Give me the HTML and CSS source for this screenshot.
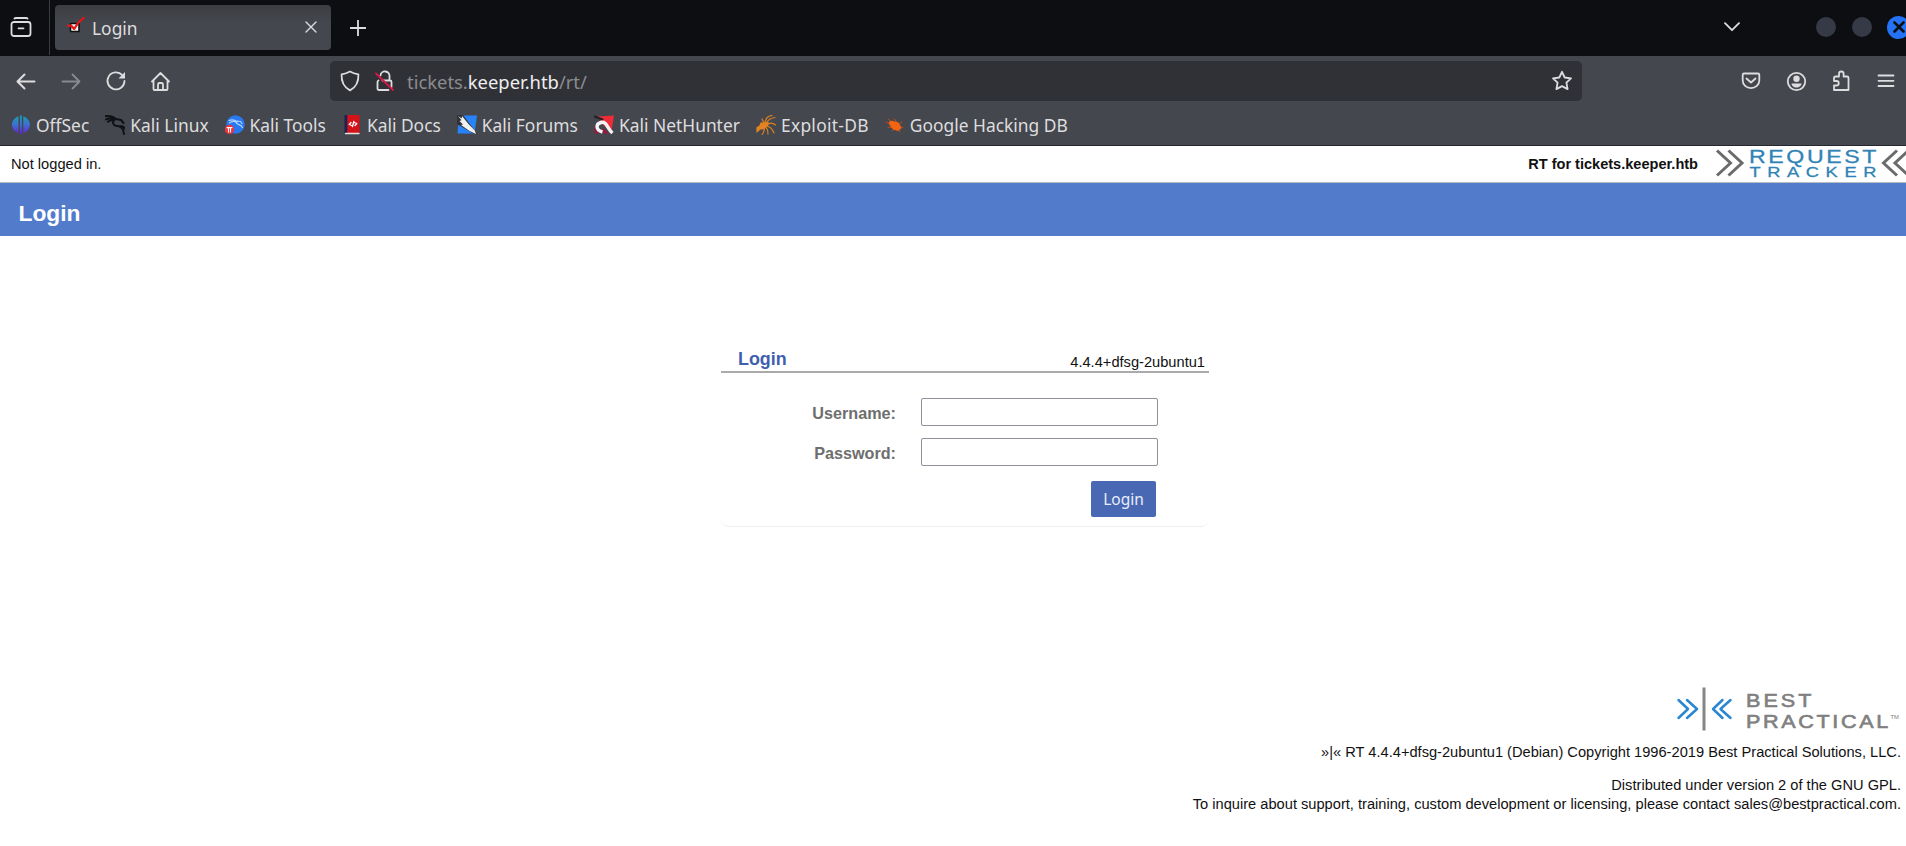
FILE: index.html
```
<!DOCTYPE html>
<html lang="en">
<head>
    <meta charset="UTF-8">
    <meta name="viewport" content="width=device-width, initial-scale=1.0">
    <title>Login</title>
    <link rel="stylesheet" href="styles.css">
</head>
<body>
    <!-- browser tabs -->
    <div class="tabbar">
        <div class="firefox-view">
            <svg width="22" height="22" viewBox="0 0 22 22"><path d="M4.500 1.500Q5 1 6 1h10q1 0 1.500.5M4 5h14a2.500 2.500 0 0 1 2.500 2.500v9a2.500 2.500 0 0 1-2.500 2.500H4a2.500 2.500 0 0 1-2.500-2.500v-9A2.500 2.500 0 0 1 4 5zM8.500 11.300h5"/></svg>
        </div>
        <div class="tab">
            <svg class="favicon" width="18" height="18" viewBox="0 0 18 18"><path fill="#f4f4f4" stroke="#111" stroke-width="1.600" d="M3.500 6.500h8.500v8H3.500z"/><path stroke="#e81518" stroke-width="2.300" d="M1.200 8.500l3 .3 3 3.200L11 6l5.500-5"/></svg>
            <span class="tab-title">Login</span>
            <svg class="tab-close" width="12" height="12" viewBox="0 0 12 12"><path stroke-width="1.400" d="M1 1l10 10M11 1L1 11"/></svg>
        </div>
        <svg class="new-tab" width="16" height="16" viewBox="0 0 16 16"><path d="M8 .5v15M.5 8h15"/></svg>
        <svg class="all-tabs" width="16" height="10" viewBox="0 0 16 10"><path d="M1 1.200l7 7 7-7"/></svg>
        <div class="window-buttons">
            <span class="dot"></span>
            <span class="dot"></span>
            <span class="dot close"><svg width="12" height="12" viewBox="0 0 12 12"><path stroke="#0d0e12" stroke-width="2.600" d="M1.500 1.500l9 9M10.500 1.500l-9 9"/></svg></span>
        </div>
    </div>

    <!-- navigation -->
    <div class="toolbar">
        <div class="nav">
            <span><svg width="22" height="22" viewBox="0 0 22 22"><path stroke-width="2" d="M19.500 11.500H3M9.500 4.500L2.500 11.500l7 7"/></svg></span>
            <span class="off"><svg width="22" height="22" viewBox="0 0 22 22"><path stroke-width="1.800" d="M2.500 11.500H19M12.500 4.500l7 7-7 7"/></svg></span>
            <span><svg width="22" height="22" viewBox="0 0 22 22"><path d="M17.300 5.200A8.500 8.500 0 1 0 19.500 11"/><path fill="#dddddf" stroke="none" d="M20 2v6.500h-6.500z"/></svg></span>
            <span><svg width="22" height="22" viewBox="0 0 22 22"><path d="M2 11.500l8.500-8.500L19 11.500M3.500 10.500V19q0 1 1 1h12q1 0 1-1v-8.500M8 20v-5.500Q8 13 9.500 13h2q1.500 0 1.500 1.500V20"/></svg></span>
        </div>
        <div class="urlbar">
            <svg width="22" height="22" viewBox="0 0 22 22"><path d="M11 1.600c2.500 1.500 5 2.300 8.400 2.800.4 7.600-1.600 12.400-8.400 16C4.200 16.800 2.200 12 2.600 4.400 6 3.900 8.500 3.100 11 1.600z"/></svg>
            <svg class="lock" width="22" height="22" viewBox="0 0 22 22"><path d="M6.500 5.500a4.500 4.500 0 0 1 9 1V10M8.500 10.500h7.500q1.500 0 1.500 1.500v5M14.500 20h-9.500q-1.500 0-1.500-1.500V12q0-1 1-1.500"/><path stroke="#d81848" d="M2 3.500l17 16.500"/></svg>
            <span class="url">tickets.<b>keeper.htb</b>/rt/</span>
            <svg class="star" width="22" height="22" viewBox="0 0 22 22"><path d="M11 1.800l2.700 5.700 6.300.9-4.600 4.300 1.200 6.400-5.600-3-5.600 3 1.200-6.400L2 8.400l6.300-.9z"/></svg>
        </div>
        <div class="nav tools">
            <span><svg width="22" height="22" viewBox="0 0 22 22"><path d="M4 3.500h14q1.300 0 1.300 1.300v5.600a8.300 7.700 0 0 1-16.600 0V4.800Q2.700 3.500 4 3.500zM6.500 8.500L11 12.500l4.500-4"/></svg></span>
            <span><svg width="22" height="22" viewBox="0 0 22 22"><circle cx="11.500" cy="11.500" r="8.700"/><path fill="#dddddf" stroke="none" d="M11.500 5.500a3.200 3.200 0 0 1 0 6.400 3.200 3.200 0 0 1 0-6.400zM6.500 13.500h10c0 2.200-2.300 4-5 4s-5-1.800-5-4z"/></svg></span>
            <span><svg width="22" height="22" viewBox="0 0 22 22"><path d="M4 11V8q0-1.500 1.500-1.500H9V3.800a2.300 2.300 0 0 1 4.600 0v2.700H17q1.500 0 1.500 1.500v12H4v-4.500h2.500a2.200 2.200 0 0 0 0-4.500z"/></svg></span>
            <span><svg width="22" height="22" viewBox="0 0 22 22"><path d="M3.500 5.500h15M3.500 10.800h15M3.500 16h15"/></svg></span>
        </div>
    </div>

    <!-- bookmarks -->
    <div class="bookmarks">
        <div class="bookmark">
            <svg width="20" height="20" viewBox="0 0 20 20"><defs><linearGradient id="offsec" x1="0" y1="0" x2="0" y2="1"><stop offset="0" stop-color="#14a3b4"/><stop offset=".5" stop-color="#3f6fd0"/><stop offset="1" stop-color="#6222d8"/></linearGradient></defs><path fill="url(#offsec)" stroke="none" d="M7.500 1.200v17Q1 15.500.8 9.700 1 4 7.500 1.200zM9 .5h1.800V19H9zM12.300 1.200v17q6.500-2.700 6.700-8.500Q18.800 4 12.300 1.200z"/></svg>
            <span>OffSec</span>
        </div>
        <div class="bookmark">
            <svg width="20" height="20" viewBox="0 0 20 20"><path stroke="#101114" stroke-width="2" d="M0 1.300c4-.6 8 .2 11.500 3M1 4.500c3-2 6-1 9-.3M3 6.800C5 5 7 5 9 5.500M9.500 5C6.500 7.500 8.500 11 12 11c4 0 6.500 2 7 8M11 4l5 1 2.500 3M16 11q3 .5 4 2.500"/></svg>
            <span>Kali Linux</span>
        </div>
        <div class="bookmark">
            <svg width="20" height="20" viewBox="0 0 20 20"><circle cx="10.500" cy="9.500" r="9.200" fill="#2878f0" stroke="none"/><path stroke="#b6d5ff" stroke-width="1.200" d="M4 5.500c3-1 6-.5 8 1.500M4.500 8C7 6 9 6 11 7c0 3 5 1.500 6.500 5.500M12 6l3.500.5 1.500 2"/><circle cx="4.500" cy="14.500" r="4.700" fill="#ed3340" stroke="none"/><path stroke="#fff" stroke-width="1.100" d="M2 12.600h5M3.500 13v4M5.500 13v4"/></svg>
            <span>Kali Tools</span>
        </div>
        <div class="bookmark">
            <svg width="20" height="20" viewBox="0 0 20 20"><path fill="#d51218" stroke="none" d="M4 0h13.500v18H4z"/><path fill="#1b2150" stroke="none" d="M2.500 0h2.800v18H2.500z"/><path stroke="#e8e4e4" d="M3.500 18.500h13.500" stroke-width="1.300"/><path stroke="#fff" stroke-width="1.300" d="M9 7.500l-1.800 2 2.500 1M13 10.500l1.800-2-2.500-1M11.800 6.500l-1.300 5"/></svg>
            <span>Kali Docs</span>
        </div>
        <div class="bookmark">
            <svg width="20" height="20" viewBox="0 0 20 20"><path fill="#2683fa" stroke="none" d="M2 .5h18L17.500 18.500H.5z"/><path fill="#303238" stroke="none" d="M0 0h6l14 18.500h-4L0 9z"/><path fill="#f0f0ee" stroke="none" d="M1 1l3.700 2.600L5 1l6.500 8 6.300 6.500 1.200 3.500-6.500-3L4 10l2-.6L2.500 6l2-.7z"/></svg>
            <span>Kali Forums</span>
        </div>
        <div class="bookmark">
            <svg width="20" height="20" viewBox="0 0 20 20"><path fill="#ed2c38" stroke="none" d="M4 1.500L20 .5 17.500 17 9 10z"/><path fill="#9e163c" stroke="none" d="M0 10l5 8.500H1zM9 13l6 5.500H9z"/><path stroke="#202126" stroke-width="2" d="M.5 1.500l8 3"/><path stroke="#f4f4f4" stroke-width="3.400" stroke-linecap="butt" d="M8.500 17C1.500 15 1.500 9 7 7.500c6-1.500 6 6 11.500 10.500"/></svg>
            <span>Kali NetHunter</span>
        </div>
        <div class="bookmark edb">
            <svg width="20" height="20" viewBox="0 0 20 20"><g stroke="#d98223" stroke-width="1.200"><path d="M9 9C9 4 12 1 16 .5M10 8c2-3 5-5 9-5.500M11 10c3-3 6-2 8.500 0M10 11c4 0 6 2 8 7M9 12c2 1 3 4 3 7M8 12c1 3 0 5-2 7.500M8 8L6 4"/></g><path fill="#e28220" stroke="none" d="M.3 12.500l3-2 1.500-3.200 3 .5 5-1-.8 4-4 3.500-3.500.2L.5 18z"/></svg>
            <span>Exploit-DB</span>
        </div>
        <div class="bookmark">
            <svg width="20" height="20" viewBox="0 0 20 20"><path stroke="#b84e20" stroke-width="1" d="M1 7l6 3M3 4l6 5M9 3.500l3 4M17 7l-4 3M3 12l6 1M7 16l3-3M15 17l-2-4M18 12.500l-4 1"/><path fill="#f26412" stroke="none" d="M3.500 8Q5 5 8 6l5.500 1.500 1.500 2.500 1.500 2-1 2-2.500 2-5-1.500-3-4z"/></svg>
            <span>Google Hacking DB</span>
        </div>
    </div>

    <!-- page -->
    <div class="topline">
        <span class="user">Not logged in.</span>
        <span class="rtname">RT for tickets.keeper.htb</span>
        <svg class="rt-logo" width="194" height="34" viewBox="0 0 194 34">
            <g stroke="#6b6b6b" stroke-width="3"><path d="M2 2.500l13.500 12.500L2 27.500M13.500 2.500L27 15 13.500 27.500M182 2.500L168.500 15 182 27.500M193.500 2.500L180 15l13.500 12.500"/></g>
            <g class="rt-text"><text transform="translate(34 15.300) scale(1.250 1)" font-size="18.500" textLength="102" lengthAdjust="spacing">REQUEST</text><text transform="translate(34.500 29) scale(1.250 1)" font-size="14.600" textLength="101.500" lengthAdjust="spacing">TRACKER</text></g>
        </svg>
    </div>
    <div class="header">
        <h1>Login</h1>
    </div>

    <div class="login-box">
        <div class="titlebox">
            <h2>Login</h2>
            <span>4.4.4+dfsg-2ubuntu1</span>
        </div>
        <form id="login" onsubmit="return false">
            <div class="row">
                <label for="user">Username:</label>
                <input type="text" id="user">
            </div>
            <div class="row">
                <label for="pass">Password:</label>
                <input type="password" id="pass">
            </div>
            <button class="btn">Login</button>
        </form>
    </div>

    <div class="footer">
        <svg class="bp-logo" width="226" height="44" viewBox="0 0 226 44">
            <g stroke="#2a86d1" stroke-width="2.500"><path d="M3.500 13l9.500 9-9.500 9M12 13l10 9-10 9M47.500 13L38 22l9.500 9M55.500 13L45.500 22l10 9"/></g>
            <path stroke="#858585" stroke-width="3" stroke-linecap="butt" d="M29 .5v43"/>
            <g class="bp-text"><text transform="translate(71 19.500) scale(1.200 1)" font-size="18" textLength="54.500" lengthAdjust="spacing">BEST</text><text transform="translate(71 40.500) scale(1.200 1)" font-size="18" textLength="118.500" lengthAdjust="spacing">PRACTICAL</text><text class="tm" x="215.500" y="32" font-size="5.500" textLength="8.500" lengthAdjust="spacingAndGlyphs">TM</text></g>
        </svg>
        <p class="copyright">&raquo;|&laquo; RT 4.4.4+dfsg-2ubuntu1 (Debian) Copyright 1996-2019 Best Practical Solutions, LLC.</p>
        <p>Distributed under version 2 of the GNU GPL.<br>To inquire about support, training, custom development or licensing, please contact sales@bestpractical.com.</p>
    </div>
</body>
</html>
```

FILE: styles.css
```
* {
    box-sizing: border-box;
}
body {
    margin: 0;
    height: 846px;
    overflow: hidden;
    background: #fff;
    color: #111;
    font-family: "Liberation Sans", Arial, sans-serif;
    font-size: 14.65px;
}
svg {
    display: block;
    flex: none;
    fill: none;
    stroke: #dddddf;
    stroke-width: 1.8;
    stroke-linecap: round;
    stroke-linejoin: round;
}

/* browser */
.tabbar, .toolbar, .bookmarks {
    display: flex;
    font-family: "Noto Sans", sans-serif;
    font-size: 17.4px;
    color: #dddddf;
    white-space: nowrap;
    overflow: hidden;
}
.tabbar {
    height: 56px;
    background: #0d0e12;
}
.firefox-view {
    width: 50px;
    height: 55px;
    padding: 17px 0 0 10px;
    border-right: 1px solid #3a3b40;
}
.tab {
    display: flex;
    align-items: center;
    width: 276px;
    height: 45px;
    margin: 5px 0 0 5px;
    padding: 0 14px 0 12px;
    border-radius: 4px;
    background: linear-gradient(#3c3d42, #45474e 40%);
}
.favicon {
    margin-top: -4px;
}
.tab-title {
    margin-left: 7px;
    flex: 1;
}
.tab-close {
    margin-top: -1px;
}
.new-tab {
    margin: 20px 0 0 19px;
}
.all-tabs {
    margin: 22px 0 0 auto;
}
.window-buttons {
    display: flex;
    align-items: center;
    width: 166px;
    height: 54px;
    padding-left: 76px;
    gap: 16px;
}
.dot {
    flex: none;
    width: 20px;
    height: 20px;
    border-radius: 50%;
    background: #353a46;
}
.close {
    display: flex;
    align-items: center;
    justify-content: center;
    width: 23px;
    height: 23px;
    margin-left: -1px;
    background: #2473f7;
}
.toolbar {
    height: 49px;
    background: #45474e;
}
.nav {
    display: flex;
    flex: none;
    width: 180px;
    height: 50px;
    margin-left: 3.5px;
}
.nav span {
    width: 45px;
    padding: 14px 0 0 11.5px;
}
.off svg {
    opacity: .45;
}
.urlbar {
    display: flex;
    align-items: center;
    flex: none;
    width: 1252px;
    height: 40px;
    margin: 5px 0 0 146.5px;
    padding: 0 9px;
    border-radius: 5px;
    background: #303136;
    font-size: 18.4px;
}
.lock {
    margin-left: 13px;
}
.url {
    flex: 1;
    margin-left: 11px;
    color: #8b8c90;
}
.url b {
    font-weight: normal;
    color: #efeff0;
}
.tools {
    margin-left: 146.5px;
}
.bookmarks {
    height: 41px;
    padding: 1px 0 0 11px;
    gap: 16px;
    background: #45474e;
    border-bottom: 1px solid #26272c;
}
.bookmark {
    display: flex;
    align-items: center;
    height: 37px;
    gap: 5px;
}
.edb {
    letter-spacing: .3px;
}

/* request tracker */
.topline {
    display: flex;
    height: 37px;
    border-bottom: 1px solid #b9bcc2;
    line-height: 17px;
}
.user {
    margin: 10px auto 0 11px;
}
.rtname {
    margin-top: 10px;
    font-size: 14.55px;
    font-weight: bold;
}
.rt-logo {
    margin: 2px -3px 0 17px;
    stroke-linecap: butt;
    stroke-linejoin: miter;
}
.rt-text {
    fill: #2f83b5;
    stroke: #2f83b5;
    stroke-width: .3;
    font-family: "Liberation Sans", sans-serif;
}
.header {
    height: 53px;
    padding: 17px 0 0 18.5px;
    background: #527bcc;
}
.header h1 {
    margin: 0;
    color: #fff;
    font-size: 22.8px;
    line-height: 26px;
}
.login-box {
    width: 488px;
    height: 184px;
    margin: 107px 0 0 721px;
    border-bottom: 1px solid #eee;
    border-radius: 0 0 8px 8px;
}
.titlebox {
    display: flex;
    justify-content: space-between;
    height: 30px;
    padding: 0 4px 0 17px;
    border-bottom: 2px solid #aaa;
}
.titlebox h2 {
    margin: 6px 0 0;
    color: #3f5fae;
    font-size: 17.9px;
    line-height: 20px;
}
.titlebox span {
    margin-top: 11px;
    line-height: 17px;
}
#login {
    padding: 25px 51px 0 0;
}
.row {
    display: flex;
    align-items: center;
    justify-content: flex-end;
    height: 28px;
    margin-bottom: 12px;
}
.row label {
    margin: 2px 25px 0 0;
    color: #6e6e6e;
    font-size: 16.2px;
    font-weight: bold;
}
.row input {
    width: 237px;
    height: 28px;
    border: 1px solid #8f8f9d;
    border-radius: 2px;
    background: #fff;
}
.btn {
    display: block;
    width: 65px;
    height: 36px;
    margin: 15px 2px 0 auto;
    padding: 0;
    border: none;
    border-radius: 2px;
    background: #4868b3;
    color: #e9edfa;
    font-family: "Noto Sans", sans-serif;
    font-size: 15.5px;
}
.footer {
    display: flex;
    flex-direction: column;
    align-items: flex-end;
    margin-top: 160px;
    padding-right: 5px;
    text-align: right;
    line-height: 19px;
}
.bp-text {
    fill: #808080;
    stroke: #808080;
    stroke-width: .6;
    font-family: "Liberation Sans", sans-serif;
}
.bp-text .tm {
    stroke: none;
}
.footer p {
    margin: 0;
}
.footer .copyright {
    margin: 12px 0 14px;
}
```
